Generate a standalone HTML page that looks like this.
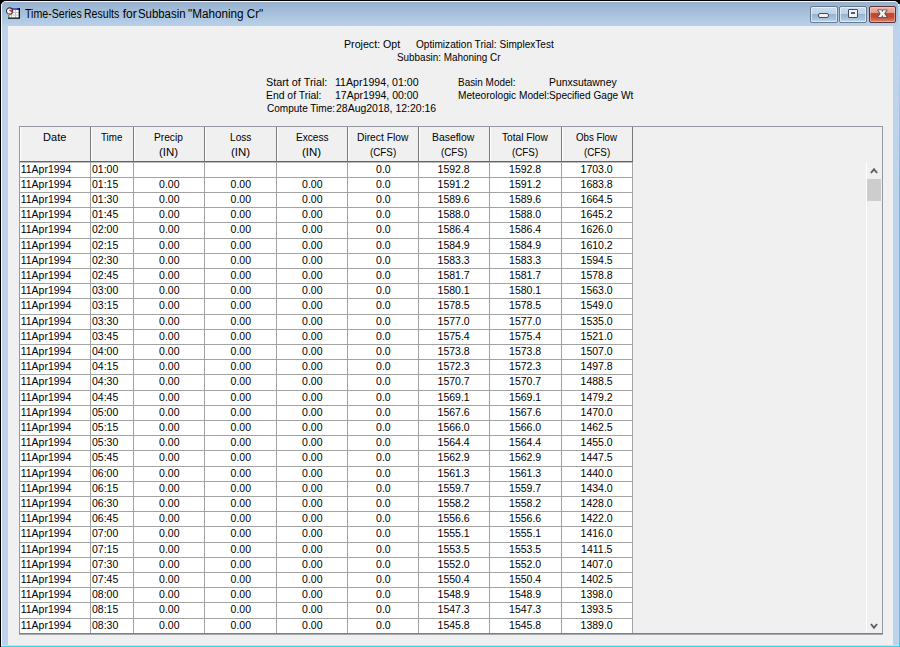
<!DOCTYPE html><html><head><meta charset="utf-8"><title>Time-Series Results</title><style>
*{margin:0;padding:0;box-sizing:border-box}
html,body{width:900px;height:647px;overflow:hidden;background:#000}
body{position:relative;font-family:"Liberation Sans",sans-serif;color:#000}
.a{position:absolute}
.t{position:absolute;white-space:pre;font-size:11px;line-height:15px;transform-origin:0 0}
</style></head><body>
<div class="a" style="left:1px;top:4px;width:899px;height:643px;background:linear-gradient(#A8E8F8,#3AD2EE 30%)"></div>
<div class="a" style="left:1px;top:1px;width:898px;height:645px;background:#F4F8FC;border-radius:5px 5px 0 0"></div>
<div class="a" style="left:2px;top:2px;width:896px;height:643px;background:#BCD3EB;border-radius:4px 4px 0 0"></div>
<div class="a" style="left:2px;top:2px;width:896px;height:24px;background:linear-gradient(#97B1CD,#B9D1EA);border-radius:4px 4px 0 0"></div>
<div class="a" style="left:8px;top:26px;width:885px;height:619px;background:#F0F0F0"></div>
<div class="a" style="left:2px;top:645px;width:896px;height:1px;background:#D6DAEE"></div>
<div class="a" style="left:898px;top:6px;width:1px;height:640px;background:#C4D2EA"></div>
<svg class="a" style="left:4px;top:5px" width="20" height="16" viewBox="4 5 20 16">
<rect x="8" y="8" width="11.5" height="10" fill="#FFFFFF"/>
<path d="M11.5 10v7.5M15.5 10v7.5M8 12.5h11.5M8 15h11.5" stroke="#C4C4C4" stroke-width="1"/>
<rect x="10" y="8" width="9.5" height="2" fill="#2F62F0"/>
<rect x="17" y="8" width="2.5" height="2" fill="#1A3CA8"/>
<rect x="8" y="15" width="1.5" height="2.5" fill="#5AA060"/>
<path d="M19.3 8v10.1H8" fill="none" stroke="#000" stroke-width="1.2"/>
<circle cx="9.6" cy="11" r="3.1" fill="#FFFFFF" stroke="#303030" stroke-width="1.1"/>
<path d="M9.4 10.3L12.3 12.2L11.8 10.1Z" fill="#E82A2A" stroke="#E82A2A" stroke-width="1"/>
</svg>
<div class="t" style="left:24.70px;top:6.50px;font-size:12px;transform:scaleX(0.8844)">Time-Series</div>
<div class="t" style="left:84.12px;top:6.50px;font-size:12px;transform:scaleX(0.8795)">Results</div>
<div class="t" style="left:122.70px;top:6.50px;font-size:12px">for</div>
<div class="t" style="left:138.45px;top:6.50px;font-size:12px;transform:scaleX(0.9500)">Subbasin</div>
<div class="t" style="left:188.30px;top:6.50px;font-size:12px;transform:scaleX(0.9740)">&quot;Mahoning Cr&quot;</div>
<div class="a" style="left:810px;top:6px;width:28px;height:17px;border:1px solid #6A7890;border-radius:2px;box-shadow:inset 0 0 0 1px rgba(255,255,255,0.55);background:linear-gradient(#C9DBEE 0%,#BDD2EA 45%,#98B3D1 50%,#A9C4E0 80%,#C2D8EE 100%)"></div>
<div class="a" style="left:818px;top:13px;width:11px;height:5px;background:#F2F2F2;border:1px solid #404A5C;border-radius:2px"></div>
<div class="a" style="left:839px;top:6px;width:28px;height:17px;border:1px solid #6A7890;border-radius:2px;box-shadow:inset 0 0 0 1px rgba(255,255,255,0.55);background:linear-gradient(#C9DBEE 0%,#BDD2EA 45%,#98B3D1 50%,#A9C4E0 80%,#C2D8EE 100%)"></div>
<div class="a" style="left:848px;top:9px;width:10px;height:9px;background:#F2F2F2;border:1px solid #404A5C;border-radius:1px"></div>
<div class="a" style="left:851px;top:12px;width:4px;height:2px;background:#4A5E80"></div>
<div class="a" style="left:869px;top:6px;width:27px;height:17px;border:1px solid #5C3138;border-radius:2px;box-shadow:inset 0 0 0 1px rgba(255,220,210,0.45);background:linear-gradient(#EEB5A8 0%,#E39C8A 38%,#C4492E 42%,#C2492F 65%,#D88470 100%)"></div>
<svg class="a" style="left:870px;top:6px" width="26" height="17" viewBox="870 6 26 17">
<path d="M878.2 10.3H881.5L882.4 12.1L883.3 10.3H886.6L884.2 13.6L886.6 16.9H883.3L882.4 15.1L881.5 16.9H878.2L880.6 13.6Z" fill="#F4F4F4" stroke="#50505C" stroke-width="1.8" stroke-linejoin="round" paint-order="stroke"/>
</svg>
<div class="t" style="left:344.43px;top:37.40px;font-size:11px;transform:scaleX(0.9684)">Project: Opt</div>
<div class="t" style="left:415.80px;top:37.40px;font-size:11px;transform:scaleX(0.9160)">Optimization Trial: SimplexTest</div>
<div class="t" style="left:397.10px;top:50.30px;font-size:11px;transform:scaleX(0.9000)">Subbasin: Mahoning Cr</div>
<div class="t" style="left:265.72px;top:74.80px;font-size:11px;transform:scaleX(0.9836)">Start of Trial:</div>
<div class="t" style="left:265.76px;top:88.00px;font-size:11px;transform:scaleX(0.9439)">End of Trial:</div>
<div class="t" style="left:266.70px;top:101.40px;font-size:11px;transform:scaleX(0.9122)">Compute Time:</div>
<div class="t" style="left:335.24px;top:74.80px;font-size:11px;transform:scaleX(0.9647)">11Apr1994, 01:00</div>
<div class="t" style="left:335.25px;top:88.00px;font-size:11px;transform:scaleX(0.9535)">17Apr1994, 00:00</div>
<div class="t" style="left:335.60px;top:101.40px;font-size:11px;transform:scaleX(0.9524)">28Aug2018, 12:20:16</div>
<div class="t" style="left:457.50px;top:74.80px;font-size:11px;transform:scaleX(0.9032)">Basin Model:</div>
<div class="t" style="left:548.65px;top:74.80px;font-size:11px;transform:scaleX(0.9451)">Punxsutawney</div>
<div class="t" style="left:458.48px;top:88.00px;font-size:11px;transform:scaleX(0.9227)">Meteorologic Model:</div>
<div class="t" style="left:548.68px;top:88.00px;font-size:11px;transform:scaleX(0.9198)">Specified Gage Wt</div>
<div class="a" style="left:19px;top:126px;width:864px;height:508px;border:1px solid #9499A1;background:#F0F0F0"></div>
<div class="a" style="left:20px;top:162.0px;width:612.0px;height:471.0px;background:#FFFFFF"></div>
<div class="a" style="left:20.0px;top:127px;width:71.0px;height:34.5px;border-left:1px solid #FFFFFF;border-right:1px solid #7A7A7A;border-bottom:1px solid #DCDCDC"></div>
<div class="t" style="left:43.10px;top:130.00px">Date</div>
<div class="a" style="left:91.0px;top:127px;width:43.0px;height:34.5px;border-left:1px solid #FFFFFF;border-right:1px solid #7A7A7A;border-bottom:1px solid #DCDCDC"></div>
<div class="t" style="left:101.45px;top:130.00px;transform:scaleX(0.8875)">Time</div>
<div class="a" style="left:134.0px;top:127px;width:71.0px;height:34.5px;border-left:1px solid #FFFFFF;border-right:1px solid #7A7A7A;border-bottom:1px solid #DCDCDC"></div>
<div class="t" style="left:154.27px;top:130.00px;transform:scaleX(0.9267)">Precip</div>
<div class="t" style="left:159.21px;top:144.50px;transform:scaleX(1.0412)">(IN)</div>
<div class="a" style="left:205.0px;top:127px;width:72.0px;height:34.5px;border-left:1px solid #FFFFFF;border-right:1px solid #7A7A7A;border-bottom:1px solid #DCDCDC"></div>
<div class="t" style="left:229.53px;top:130.00px;transform:scaleX(0.9227)">Loss</div>
<div class="t" style="left:230.71px;top:144.50px;transform:scaleX(1.0412)">(IN)</div>
<div class="a" style="left:277.0px;top:127px;width:71.0px;height:34.5px;border-left:1px solid #FFFFFF;border-right:1px solid #7A7A7A;border-bottom:1px solid #DCDCDC"></div>
<div class="t" style="left:295.58px;top:130.00px;transform:scaleX(0.9176)">Excess</div>
<div class="t" style="left:302.21px;top:144.50px;transform:scaleX(1.0412)">(IN)</div>
<div class="a" style="left:348.0px;top:127px;width:71.0px;height:34.5px;border-left:1px solid #FFFFFF;border-right:1px solid #7A7A7A;border-bottom:1px solid #DCDCDC"></div>
<div class="t" style="left:356.97px;top:130.00px;transform:scaleX(0.9333)">Direct Flow</div>
<div class="t" style="left:369.71px;top:144.50px;transform:scaleX(0.8929)">(CFS)</div>
<div class="a" style="left:419.0px;top:127px;width:71.0px;height:34.5px;border-left:1px solid #FFFFFF;border-right:1px solid #7A7A7A;border-bottom:1px solid #DCDCDC"></div>
<div class="t" style="left:432.35px;top:130.00px;transform:scaleX(0.9455)">Baseflow</div>
<div class="t" style="left:440.71px;top:144.50px;transform:scaleX(0.8929)">(CFS)</div>
<div class="a" style="left:490.0px;top:127px;width:72.0px;height:34.5px;border-left:1px solid #FFFFFF;border-right:1px solid #7A7A7A;border-bottom:1px solid #DCDCDC"></div>
<div class="t" style="left:502.45px;top:130.00px;transform:scaleX(0.9260)">Total Flow</div>
<div class="t" style="left:512.21px;top:144.50px;transform:scaleX(0.8929)">(CFS)</div>
<div class="a" style="left:562.0px;top:127px;width:71.0px;height:34.5px;border-left:1px solid #FFFFFF;border-right:1px solid #7A7A7A;border-bottom:1px solid #DCDCDC"></div>
<div class="t" style="left:576.35px;top:130.00px;transform:scaleX(0.8830)">Obs Flow</div>
<div class="t" style="left:583.71px;top:144.50px;transform:scaleX(0.8929)">(CFS)</div>
<div class="a" style="left:20px;top:161.0px;width:613.0px;height:1px;background:#646464"></div>
<div class="a" style="left:20px;top:162.0px;width:613.0px;height:1px;background:#BDBDBD"></div>
<div class="a" style="left:19px;top:633px;width:864px;height:1px;background:#7C8089"></div>
<div class="a" style="left:19px;top:634px;width:864px;height:1px;background:#A4A8AF"></div>
<div class="a" style="left:90.0px;top:162.0px;width:1px;height:471.0px;background:#A3A3A3"></div>
<div class="a" style="left:133.0px;top:162.0px;width:1px;height:471.0px;background:#A3A3A3"></div>
<div class="a" style="left:204.0px;top:162.0px;width:1px;height:471.0px;background:#A3A3A3"></div>
<div class="a" style="left:276.0px;top:162.0px;width:1px;height:471.0px;background:#A3A3A3"></div>
<div class="a" style="left:347.0px;top:162.0px;width:1px;height:471.0px;background:#A3A3A3"></div>
<div class="a" style="left:418.0px;top:162.0px;width:1px;height:471.0px;background:#A3A3A3"></div>
<div class="a" style="left:489.0px;top:162.0px;width:1px;height:471.0px;background:#A3A3A3"></div>
<div class="a" style="left:561.0px;top:162.0px;width:1px;height:471.0px;background:#A3A3A3"></div>
<div class="a" style="left:632.0px;top:162.0px;width:1px;height:471.0px;background:#A3A3A3"></div>
<div class="a" style="left:20px;top:176.7px;width:613.0px;height:1px;background:#A3A3A3"></div>
<div class="a" style="left:20px;top:191.9px;width:613.0px;height:1px;background:#A3A3A3"></div>
<div class="a" style="left:20px;top:207.1px;width:613.0px;height:1px;background:#A3A3A3"></div>
<div class="a" style="left:20px;top:222.3px;width:613.0px;height:1px;background:#A3A3A3"></div>
<div class="a" style="left:20px;top:237.5px;width:613.0px;height:1px;background:#A3A3A3"></div>
<div class="a" style="left:20px;top:252.7px;width:613.0px;height:1px;background:#A3A3A3"></div>
<div class="a" style="left:20px;top:267.9px;width:613.0px;height:1px;background:#A3A3A3"></div>
<div class="a" style="left:20px;top:283.1px;width:613.0px;height:1px;background:#A3A3A3"></div>
<div class="a" style="left:20px;top:298.3px;width:613.0px;height:1px;background:#A3A3A3"></div>
<div class="a" style="left:20px;top:313.5px;width:613.0px;height:1px;background:#A3A3A3"></div>
<div class="a" style="left:20px;top:328.7px;width:613.0px;height:1px;background:#A3A3A3"></div>
<div class="a" style="left:20px;top:343.9px;width:613.0px;height:1px;background:#A3A3A3"></div>
<div class="a" style="left:20px;top:359.1px;width:613.0px;height:1px;background:#A3A3A3"></div>
<div class="a" style="left:20px;top:374.3px;width:613.0px;height:1px;background:#A3A3A3"></div>
<div class="a" style="left:20px;top:389.5px;width:613.0px;height:1px;background:#A3A3A3"></div>
<div class="a" style="left:20px;top:404.7px;width:613.0px;height:1px;background:#A3A3A3"></div>
<div class="a" style="left:20px;top:420.0px;width:613.0px;height:1px;background:#A3A3A3"></div>
<div class="a" style="left:20px;top:435.2px;width:613.0px;height:1px;background:#A3A3A3"></div>
<div class="a" style="left:20px;top:450.4px;width:613.0px;height:1px;background:#A3A3A3"></div>
<div class="a" style="left:20px;top:465.6px;width:613.0px;height:1px;background:#A3A3A3"></div>
<div class="a" style="left:20px;top:480.8px;width:613.0px;height:1px;background:#A3A3A3"></div>
<div class="a" style="left:20px;top:496.0px;width:613.0px;height:1px;background:#A3A3A3"></div>
<div class="a" style="left:20px;top:511.2px;width:613.0px;height:1px;background:#A3A3A3"></div>
<div class="a" style="left:20px;top:526.4px;width:613.0px;height:1px;background:#A3A3A3"></div>
<div class="a" style="left:20px;top:541.6px;width:613.0px;height:1px;background:#A3A3A3"></div>
<div class="a" style="left:20px;top:556.8px;width:613.0px;height:1px;background:#A3A3A3"></div>
<div class="a" style="left:20px;top:572.0px;width:613.0px;height:1px;background:#A3A3A3"></div>
<div class="a" style="left:20px;top:587.2px;width:613.0px;height:1px;background:#A3A3A3"></div>
<div class="a" style="left:20px;top:602.4px;width:613.0px;height:1px;background:#A3A3A3"></div>
<div class="a" style="left:20px;top:617.6px;width:613.0px;height:1px;background:#A3A3A3"></div>
<div class="t" style="left:20.70px;top:161.50px;font-size:10.5px">11Apr1994</div>
<div class="t" style="left:92.00px;top:161.50px;font-size:10.5px">01:00</div>
<div class="t" style="left:376.10px;top:161.50px;font-size:10.5px">0.0</div>
<div class="t" style="left:437.60px;top:161.50px;font-size:10.5px">1592.8</div>
<div class="t" style="left:509.10px;top:161.50px;font-size:10.5px">1592.8</div>
<div class="t" style="left:580.60px;top:161.50px;font-size:10.5px">1703.0</div>
<div class="t" style="left:20.70px;top:176.70px;font-size:10.5px">11Apr1994</div>
<div class="t" style="left:92.00px;top:176.70px;font-size:10.5px">01:15</div>
<div class="t" style="left:159.10px;top:176.70px;font-size:10.5px">0.00</div>
<div class="t" style="left:230.60px;top:176.70px;font-size:10.5px">0.00</div>
<div class="t" style="left:302.10px;top:176.70px;font-size:10.5px">0.00</div>
<div class="t" style="left:376.10px;top:176.70px;font-size:10.5px">0.0</div>
<div class="t" style="left:437.60px;top:176.70px;font-size:10.5px">1591.2</div>
<div class="t" style="left:509.10px;top:176.70px;font-size:10.5px">1591.2</div>
<div class="t" style="left:580.60px;top:176.70px;font-size:10.5px">1683.8</div>
<div class="t" style="left:20.70px;top:191.91px;font-size:10.5px">11Apr1994</div>
<div class="t" style="left:92.00px;top:191.91px;font-size:10.5px">01:30</div>
<div class="t" style="left:159.10px;top:191.91px;font-size:10.5px">0.00</div>
<div class="t" style="left:230.60px;top:191.91px;font-size:10.5px">0.00</div>
<div class="t" style="left:302.10px;top:191.91px;font-size:10.5px">0.00</div>
<div class="t" style="left:376.10px;top:191.91px;font-size:10.5px">0.0</div>
<div class="t" style="left:437.60px;top:191.91px;font-size:10.5px">1589.6</div>
<div class="t" style="left:509.10px;top:191.91px;font-size:10.5px">1589.6</div>
<div class="t" style="left:580.60px;top:191.91px;font-size:10.5px">1664.5</div>
<div class="t" style="left:20.70px;top:207.11px;font-size:10.5px">11Apr1994</div>
<div class="t" style="left:92.00px;top:207.11px;font-size:10.5px">01:45</div>
<div class="t" style="left:159.10px;top:207.11px;font-size:10.5px">0.00</div>
<div class="t" style="left:230.60px;top:207.11px;font-size:10.5px">0.00</div>
<div class="t" style="left:302.10px;top:207.11px;font-size:10.5px">0.00</div>
<div class="t" style="left:376.10px;top:207.11px;font-size:10.5px">0.0</div>
<div class="t" style="left:437.60px;top:207.11px;font-size:10.5px">1588.0</div>
<div class="t" style="left:509.10px;top:207.11px;font-size:10.5px">1588.0</div>
<div class="t" style="left:580.60px;top:207.11px;font-size:10.5px">1645.2</div>
<div class="t" style="left:20.70px;top:222.31px;font-size:10.5px">11Apr1994</div>
<div class="t" style="left:92.00px;top:222.31px;font-size:10.5px">02:00</div>
<div class="t" style="left:159.10px;top:222.31px;font-size:10.5px">0.00</div>
<div class="t" style="left:230.60px;top:222.31px;font-size:10.5px">0.00</div>
<div class="t" style="left:302.10px;top:222.31px;font-size:10.5px">0.00</div>
<div class="t" style="left:376.10px;top:222.31px;font-size:10.5px">0.0</div>
<div class="t" style="left:437.60px;top:222.31px;font-size:10.5px">1586.4</div>
<div class="t" style="left:509.10px;top:222.31px;font-size:10.5px">1586.4</div>
<div class="t" style="left:580.60px;top:222.31px;font-size:10.5px">1626.0</div>
<div class="t" style="left:20.70px;top:237.51px;font-size:10.5px">11Apr1994</div>
<div class="t" style="left:92.00px;top:237.51px;font-size:10.5px">02:15</div>
<div class="t" style="left:159.10px;top:237.51px;font-size:10.5px">0.00</div>
<div class="t" style="left:230.60px;top:237.51px;font-size:10.5px">0.00</div>
<div class="t" style="left:302.10px;top:237.51px;font-size:10.5px">0.00</div>
<div class="t" style="left:376.10px;top:237.51px;font-size:10.5px">0.0</div>
<div class="t" style="left:437.60px;top:237.51px;font-size:10.5px">1584.9</div>
<div class="t" style="left:509.10px;top:237.51px;font-size:10.5px">1584.9</div>
<div class="t" style="left:580.60px;top:237.51px;font-size:10.5px">1610.2</div>
<div class="t" style="left:20.70px;top:252.72px;font-size:10.5px">11Apr1994</div>
<div class="t" style="left:92.00px;top:252.72px;font-size:10.5px">02:30</div>
<div class="t" style="left:159.10px;top:252.72px;font-size:10.5px">0.00</div>
<div class="t" style="left:230.60px;top:252.72px;font-size:10.5px">0.00</div>
<div class="t" style="left:302.10px;top:252.72px;font-size:10.5px">0.00</div>
<div class="t" style="left:376.10px;top:252.72px;font-size:10.5px">0.0</div>
<div class="t" style="left:437.60px;top:252.72px;font-size:10.5px">1583.3</div>
<div class="t" style="left:509.10px;top:252.72px;font-size:10.5px">1583.3</div>
<div class="t" style="left:580.60px;top:252.72px;font-size:10.5px">1594.5</div>
<div class="t" style="left:20.70px;top:267.92px;font-size:10.5px">11Apr1994</div>
<div class="t" style="left:92.00px;top:267.92px;font-size:10.5px">02:45</div>
<div class="t" style="left:159.10px;top:267.92px;font-size:10.5px">0.00</div>
<div class="t" style="left:230.60px;top:267.92px;font-size:10.5px">0.00</div>
<div class="t" style="left:302.10px;top:267.92px;font-size:10.5px">0.00</div>
<div class="t" style="left:376.10px;top:267.92px;font-size:10.5px">0.0</div>
<div class="t" style="left:437.60px;top:267.92px;font-size:10.5px">1581.7</div>
<div class="t" style="left:509.10px;top:267.92px;font-size:10.5px">1581.7</div>
<div class="t" style="left:580.60px;top:267.92px;font-size:10.5px">1578.8</div>
<div class="t" style="left:20.70px;top:283.12px;font-size:10.5px">11Apr1994</div>
<div class="t" style="left:92.00px;top:283.12px;font-size:10.5px">03:00</div>
<div class="t" style="left:159.10px;top:283.12px;font-size:10.5px">0.00</div>
<div class="t" style="left:230.60px;top:283.12px;font-size:10.5px">0.00</div>
<div class="t" style="left:302.10px;top:283.12px;font-size:10.5px">0.00</div>
<div class="t" style="left:376.10px;top:283.12px;font-size:10.5px">0.0</div>
<div class="t" style="left:437.60px;top:283.12px;font-size:10.5px">1580.1</div>
<div class="t" style="left:509.10px;top:283.12px;font-size:10.5px">1580.1</div>
<div class="t" style="left:580.60px;top:283.12px;font-size:10.5px">1563.0</div>
<div class="t" style="left:20.70px;top:298.33px;font-size:10.5px">11Apr1994</div>
<div class="t" style="left:92.00px;top:298.33px;font-size:10.5px">03:15</div>
<div class="t" style="left:159.10px;top:298.33px;font-size:10.5px">0.00</div>
<div class="t" style="left:230.60px;top:298.33px;font-size:10.5px">0.00</div>
<div class="t" style="left:302.10px;top:298.33px;font-size:10.5px">0.00</div>
<div class="t" style="left:376.10px;top:298.33px;font-size:10.5px">0.0</div>
<div class="t" style="left:437.60px;top:298.33px;font-size:10.5px">1578.5</div>
<div class="t" style="left:509.10px;top:298.33px;font-size:10.5px">1578.5</div>
<div class="t" style="left:580.60px;top:298.33px;font-size:10.5px">1549.0</div>
<div class="t" style="left:20.70px;top:313.53px;font-size:10.5px">11Apr1994</div>
<div class="t" style="left:92.00px;top:313.53px;font-size:10.5px">03:30</div>
<div class="t" style="left:159.10px;top:313.53px;font-size:10.5px">0.00</div>
<div class="t" style="left:230.60px;top:313.53px;font-size:10.5px">0.00</div>
<div class="t" style="left:302.10px;top:313.53px;font-size:10.5px">0.00</div>
<div class="t" style="left:376.10px;top:313.53px;font-size:10.5px">0.0</div>
<div class="t" style="left:437.60px;top:313.53px;font-size:10.5px">1577.0</div>
<div class="t" style="left:509.10px;top:313.53px;font-size:10.5px">1577.0</div>
<div class="t" style="left:580.60px;top:313.53px;font-size:10.5px">1535.0</div>
<div class="t" style="left:20.70px;top:328.73px;font-size:10.5px">11Apr1994</div>
<div class="t" style="left:92.00px;top:328.73px;font-size:10.5px">03:45</div>
<div class="t" style="left:159.10px;top:328.73px;font-size:10.5px">0.00</div>
<div class="t" style="left:230.60px;top:328.73px;font-size:10.5px">0.00</div>
<div class="t" style="left:302.10px;top:328.73px;font-size:10.5px">0.00</div>
<div class="t" style="left:376.10px;top:328.73px;font-size:10.5px">0.0</div>
<div class="t" style="left:437.60px;top:328.73px;font-size:10.5px">1575.4</div>
<div class="t" style="left:509.10px;top:328.73px;font-size:10.5px">1575.4</div>
<div class="t" style="left:580.60px;top:328.73px;font-size:10.5px">1521.0</div>
<div class="t" style="left:20.70px;top:343.94px;font-size:10.5px">11Apr1994</div>
<div class="t" style="left:92.00px;top:343.94px;font-size:10.5px">04:00</div>
<div class="t" style="left:159.10px;top:343.94px;font-size:10.5px">0.00</div>
<div class="t" style="left:230.60px;top:343.94px;font-size:10.5px">0.00</div>
<div class="t" style="left:302.10px;top:343.94px;font-size:10.5px">0.00</div>
<div class="t" style="left:376.10px;top:343.94px;font-size:10.5px">0.0</div>
<div class="t" style="left:437.60px;top:343.94px;font-size:10.5px">1573.8</div>
<div class="t" style="left:509.10px;top:343.94px;font-size:10.5px">1573.8</div>
<div class="t" style="left:580.60px;top:343.94px;font-size:10.5px">1507.0</div>
<div class="t" style="left:20.70px;top:359.14px;font-size:10.5px">11Apr1994</div>
<div class="t" style="left:92.00px;top:359.14px;font-size:10.5px">04:15</div>
<div class="t" style="left:159.10px;top:359.14px;font-size:10.5px">0.00</div>
<div class="t" style="left:230.60px;top:359.14px;font-size:10.5px">0.00</div>
<div class="t" style="left:302.10px;top:359.14px;font-size:10.5px">0.00</div>
<div class="t" style="left:376.10px;top:359.14px;font-size:10.5px">0.0</div>
<div class="t" style="left:437.60px;top:359.14px;font-size:10.5px">1572.3</div>
<div class="t" style="left:509.10px;top:359.14px;font-size:10.5px">1572.3</div>
<div class="t" style="left:580.60px;top:359.14px;font-size:10.5px">1497.8</div>
<div class="t" style="left:20.70px;top:374.34px;font-size:10.5px">11Apr1994</div>
<div class="t" style="left:92.00px;top:374.34px;font-size:10.5px">04:30</div>
<div class="t" style="left:159.10px;top:374.34px;font-size:10.5px">0.00</div>
<div class="t" style="left:230.60px;top:374.34px;font-size:10.5px">0.00</div>
<div class="t" style="left:302.10px;top:374.34px;font-size:10.5px">0.00</div>
<div class="t" style="left:376.10px;top:374.34px;font-size:10.5px">0.0</div>
<div class="t" style="left:437.60px;top:374.34px;font-size:10.5px">1570.7</div>
<div class="t" style="left:509.10px;top:374.34px;font-size:10.5px">1570.7</div>
<div class="t" style="left:580.60px;top:374.34px;font-size:10.5px">1488.5</div>
<div class="t" style="left:20.70px;top:389.54px;font-size:10.5px">11Apr1994</div>
<div class="t" style="left:92.00px;top:389.54px;font-size:10.5px">04:45</div>
<div class="t" style="left:159.10px;top:389.54px;font-size:10.5px">0.00</div>
<div class="t" style="left:230.60px;top:389.54px;font-size:10.5px">0.00</div>
<div class="t" style="left:302.10px;top:389.54px;font-size:10.5px">0.00</div>
<div class="t" style="left:376.10px;top:389.54px;font-size:10.5px">0.0</div>
<div class="t" style="left:437.60px;top:389.54px;font-size:10.5px">1569.1</div>
<div class="t" style="left:509.10px;top:389.54px;font-size:10.5px">1569.1</div>
<div class="t" style="left:580.60px;top:389.54px;font-size:10.5px">1479.2</div>
<div class="t" style="left:20.70px;top:404.75px;font-size:10.5px">11Apr1994</div>
<div class="t" style="left:92.00px;top:404.75px;font-size:10.5px">05:00</div>
<div class="t" style="left:159.10px;top:404.75px;font-size:10.5px">0.00</div>
<div class="t" style="left:230.60px;top:404.75px;font-size:10.5px">0.00</div>
<div class="t" style="left:302.10px;top:404.75px;font-size:10.5px">0.00</div>
<div class="t" style="left:376.10px;top:404.75px;font-size:10.5px">0.0</div>
<div class="t" style="left:437.60px;top:404.75px;font-size:10.5px">1567.6</div>
<div class="t" style="left:509.10px;top:404.75px;font-size:10.5px">1567.6</div>
<div class="t" style="left:580.60px;top:404.75px;font-size:10.5px">1470.0</div>
<div class="t" style="left:20.70px;top:419.95px;font-size:10.5px">11Apr1994</div>
<div class="t" style="left:92.00px;top:419.95px;font-size:10.5px">05:15</div>
<div class="t" style="left:159.10px;top:419.95px;font-size:10.5px">0.00</div>
<div class="t" style="left:230.60px;top:419.95px;font-size:10.5px">0.00</div>
<div class="t" style="left:302.10px;top:419.95px;font-size:10.5px">0.00</div>
<div class="t" style="left:376.10px;top:419.95px;font-size:10.5px">0.0</div>
<div class="t" style="left:437.60px;top:419.95px;font-size:10.5px">1566.0</div>
<div class="t" style="left:509.10px;top:419.95px;font-size:10.5px">1566.0</div>
<div class="t" style="left:580.60px;top:419.95px;font-size:10.5px">1462.5</div>
<div class="t" style="left:20.70px;top:435.15px;font-size:10.5px">11Apr1994</div>
<div class="t" style="left:92.00px;top:435.15px;font-size:10.5px">05:30</div>
<div class="t" style="left:159.10px;top:435.15px;font-size:10.5px">0.00</div>
<div class="t" style="left:230.60px;top:435.15px;font-size:10.5px">0.00</div>
<div class="t" style="left:302.10px;top:435.15px;font-size:10.5px">0.00</div>
<div class="t" style="left:376.10px;top:435.15px;font-size:10.5px">0.0</div>
<div class="t" style="left:437.60px;top:435.15px;font-size:10.5px">1564.4</div>
<div class="t" style="left:509.10px;top:435.15px;font-size:10.5px">1564.4</div>
<div class="t" style="left:580.60px;top:435.15px;font-size:10.5px">1455.0</div>
<div class="t" style="left:20.70px;top:450.36px;font-size:10.5px">11Apr1994</div>
<div class="t" style="left:92.00px;top:450.36px;font-size:10.5px">05:45</div>
<div class="t" style="left:159.10px;top:450.36px;font-size:10.5px">0.00</div>
<div class="t" style="left:230.60px;top:450.36px;font-size:10.5px">0.00</div>
<div class="t" style="left:302.10px;top:450.36px;font-size:10.5px">0.00</div>
<div class="t" style="left:376.10px;top:450.36px;font-size:10.5px">0.0</div>
<div class="t" style="left:437.60px;top:450.36px;font-size:10.5px">1562.9</div>
<div class="t" style="left:509.10px;top:450.36px;font-size:10.5px">1562.9</div>
<div class="t" style="left:580.60px;top:450.36px;font-size:10.5px">1447.5</div>
<div class="t" style="left:20.70px;top:465.56px;font-size:10.5px">11Apr1994</div>
<div class="t" style="left:92.00px;top:465.56px;font-size:10.5px">06:00</div>
<div class="t" style="left:159.10px;top:465.56px;font-size:10.5px">0.00</div>
<div class="t" style="left:230.60px;top:465.56px;font-size:10.5px">0.00</div>
<div class="t" style="left:302.10px;top:465.56px;font-size:10.5px">0.00</div>
<div class="t" style="left:376.10px;top:465.56px;font-size:10.5px">0.0</div>
<div class="t" style="left:437.60px;top:465.56px;font-size:10.5px">1561.3</div>
<div class="t" style="left:509.10px;top:465.56px;font-size:10.5px">1561.3</div>
<div class="t" style="left:580.60px;top:465.56px;font-size:10.5px">1440.0</div>
<div class="t" style="left:20.70px;top:480.76px;font-size:10.5px">11Apr1994</div>
<div class="t" style="left:92.00px;top:480.76px;font-size:10.5px">06:15</div>
<div class="t" style="left:159.10px;top:480.76px;font-size:10.5px">0.00</div>
<div class="t" style="left:230.60px;top:480.76px;font-size:10.5px">0.00</div>
<div class="t" style="left:302.10px;top:480.76px;font-size:10.5px">0.00</div>
<div class="t" style="left:376.10px;top:480.76px;font-size:10.5px">0.0</div>
<div class="t" style="left:437.60px;top:480.76px;font-size:10.5px">1559.7</div>
<div class="t" style="left:509.10px;top:480.76px;font-size:10.5px">1559.7</div>
<div class="t" style="left:580.60px;top:480.76px;font-size:10.5px">1434.0</div>
<div class="t" style="left:20.70px;top:495.97px;font-size:10.5px">11Apr1994</div>
<div class="t" style="left:92.00px;top:495.97px;font-size:10.5px">06:30</div>
<div class="t" style="left:159.10px;top:495.97px;font-size:10.5px">0.00</div>
<div class="t" style="left:230.60px;top:495.97px;font-size:10.5px">0.00</div>
<div class="t" style="left:302.10px;top:495.97px;font-size:10.5px">0.00</div>
<div class="t" style="left:376.10px;top:495.97px;font-size:10.5px">0.0</div>
<div class="t" style="left:437.60px;top:495.97px;font-size:10.5px">1558.2</div>
<div class="t" style="left:509.10px;top:495.97px;font-size:10.5px">1558.2</div>
<div class="t" style="left:580.60px;top:495.97px;font-size:10.5px">1428.0</div>
<div class="t" style="left:20.70px;top:511.17px;font-size:10.5px">11Apr1994</div>
<div class="t" style="left:92.00px;top:511.17px;font-size:10.5px">06:45</div>
<div class="t" style="left:159.10px;top:511.17px;font-size:10.5px">0.00</div>
<div class="t" style="left:230.60px;top:511.17px;font-size:10.5px">0.00</div>
<div class="t" style="left:302.10px;top:511.17px;font-size:10.5px">0.00</div>
<div class="t" style="left:376.10px;top:511.17px;font-size:10.5px">0.0</div>
<div class="t" style="left:437.60px;top:511.17px;font-size:10.5px">1556.6</div>
<div class="t" style="left:509.10px;top:511.17px;font-size:10.5px">1556.6</div>
<div class="t" style="left:580.60px;top:511.17px;font-size:10.5px">1422.0</div>
<div class="t" style="left:20.70px;top:526.37px;font-size:10.5px">11Apr1994</div>
<div class="t" style="left:92.00px;top:526.37px;font-size:10.5px">07:00</div>
<div class="t" style="left:159.10px;top:526.37px;font-size:10.5px">0.00</div>
<div class="t" style="left:230.60px;top:526.37px;font-size:10.5px">0.00</div>
<div class="t" style="left:302.10px;top:526.37px;font-size:10.5px">0.00</div>
<div class="t" style="left:376.10px;top:526.37px;font-size:10.5px">0.0</div>
<div class="t" style="left:437.60px;top:526.37px;font-size:10.5px">1555.1</div>
<div class="t" style="left:509.10px;top:526.37px;font-size:10.5px">1555.1</div>
<div class="t" style="left:580.60px;top:526.37px;font-size:10.5px">1416.0</div>
<div class="t" style="left:20.70px;top:541.58px;font-size:10.5px">11Apr1994</div>
<div class="t" style="left:92.00px;top:541.58px;font-size:10.5px">07:15</div>
<div class="t" style="left:159.10px;top:541.58px;font-size:10.5px">0.00</div>
<div class="t" style="left:230.60px;top:541.58px;font-size:10.5px">0.00</div>
<div class="t" style="left:302.10px;top:541.58px;font-size:10.5px">0.00</div>
<div class="t" style="left:376.10px;top:541.58px;font-size:10.5px">0.0</div>
<div class="t" style="left:437.60px;top:541.58px;font-size:10.5px">1553.5</div>
<div class="t" style="left:509.10px;top:541.58px;font-size:10.5px">1553.5</div>
<div class="t" style="left:581.10px;top:541.58px;font-size:10.5px">1411.5</div>
<div class="t" style="left:20.70px;top:556.78px;font-size:10.5px">11Apr1994</div>
<div class="t" style="left:92.00px;top:556.78px;font-size:10.5px">07:30</div>
<div class="t" style="left:159.10px;top:556.78px;font-size:10.5px">0.00</div>
<div class="t" style="left:230.60px;top:556.78px;font-size:10.5px">0.00</div>
<div class="t" style="left:302.10px;top:556.78px;font-size:10.5px">0.00</div>
<div class="t" style="left:376.10px;top:556.78px;font-size:10.5px">0.0</div>
<div class="t" style="left:437.60px;top:556.78px;font-size:10.5px">1552.0</div>
<div class="t" style="left:509.10px;top:556.78px;font-size:10.5px">1552.0</div>
<div class="t" style="left:580.60px;top:556.78px;font-size:10.5px">1407.0</div>
<div class="t" style="left:20.70px;top:571.98px;font-size:10.5px">11Apr1994</div>
<div class="t" style="left:92.00px;top:571.98px;font-size:10.5px">07:45</div>
<div class="t" style="left:159.10px;top:571.98px;font-size:10.5px">0.00</div>
<div class="t" style="left:230.60px;top:571.98px;font-size:10.5px">0.00</div>
<div class="t" style="left:302.10px;top:571.98px;font-size:10.5px">0.00</div>
<div class="t" style="left:376.10px;top:571.98px;font-size:10.5px">0.0</div>
<div class="t" style="left:437.60px;top:571.98px;font-size:10.5px">1550.4</div>
<div class="t" style="left:509.10px;top:571.98px;font-size:10.5px">1550.4</div>
<div class="t" style="left:580.60px;top:571.98px;font-size:10.5px">1402.5</div>
<div class="t" style="left:20.70px;top:587.18px;font-size:10.5px">11Apr1994</div>
<div class="t" style="left:92.00px;top:587.18px;font-size:10.5px">08:00</div>
<div class="t" style="left:159.10px;top:587.18px;font-size:10.5px">0.00</div>
<div class="t" style="left:230.60px;top:587.18px;font-size:10.5px">0.00</div>
<div class="t" style="left:302.10px;top:587.18px;font-size:10.5px">0.00</div>
<div class="t" style="left:376.10px;top:587.18px;font-size:10.5px">0.0</div>
<div class="t" style="left:437.60px;top:587.18px;font-size:10.5px">1548.9</div>
<div class="t" style="left:509.10px;top:587.18px;font-size:10.5px">1548.9</div>
<div class="t" style="left:580.60px;top:587.18px;font-size:10.5px">1398.0</div>
<div class="t" style="left:20.70px;top:602.39px;font-size:10.5px">11Apr1994</div>
<div class="t" style="left:92.00px;top:602.39px;font-size:10.5px">08:15</div>
<div class="t" style="left:159.10px;top:602.39px;font-size:10.5px">0.00</div>
<div class="t" style="left:230.60px;top:602.39px;font-size:10.5px">0.00</div>
<div class="t" style="left:302.10px;top:602.39px;font-size:10.5px">0.00</div>
<div class="t" style="left:376.10px;top:602.39px;font-size:10.5px">0.0</div>
<div class="t" style="left:437.60px;top:602.39px;font-size:10.5px">1547.3</div>
<div class="t" style="left:509.10px;top:602.39px;font-size:10.5px">1547.3</div>
<div class="t" style="left:580.60px;top:602.39px;font-size:10.5px">1393.5</div>
<div class="t" style="left:20.70px;top:617.59px;font-size:10.5px">11Apr1994</div>
<div class="t" style="left:92.00px;top:617.59px;font-size:10.5px">08:30</div>
<div class="t" style="left:159.10px;top:617.59px;font-size:10.5px">0.00</div>
<div class="t" style="left:230.60px;top:617.59px;font-size:10.5px">0.00</div>
<div class="t" style="left:302.10px;top:617.59px;font-size:10.5px">0.00</div>
<div class="t" style="left:376.10px;top:617.59px;font-size:10.5px">0.0</div>
<div class="t" style="left:437.60px;top:617.59px;font-size:10.5px">1545.8</div>
<div class="t" style="left:509.10px;top:617.59px;font-size:10.5px">1545.8</div>
<div class="t" style="left:580.60px;top:617.59px;font-size:10.5px">1389.0</div>
<div class="a" style="left:866px;top:162.0px;width:1px;height:471.0px;background:#FFFFFF"></div>
<div class="a" style="left:867px;top:179px;width:14px;height:22px;background:#CDCDCD"></div>
<svg class="a" style="left:868px;top:165px" width="12" height="10" viewBox="0 0 12 10">
<path d="M2.9 8L6 4.3L9.1 8" fill="none" stroke="#606060" stroke-width="1.9"/></svg>
<svg class="a" style="left:868px;top:620px" width="12" height="10" viewBox="0 0 12 10">
<path d="M2.9 4L6 7.7L9.1 4" fill="none" stroke="#606060" stroke-width="1.9"/></svg>
</body></html>
